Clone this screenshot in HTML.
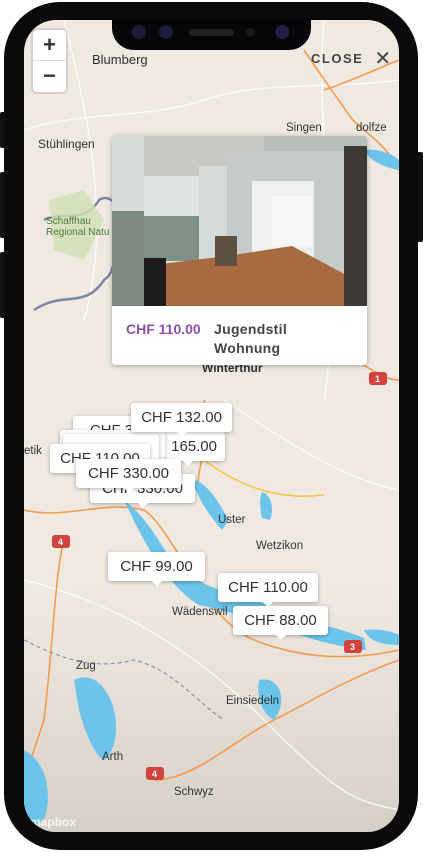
<!DOCTYPE html>
<html><head><meta charset="utf-8"><style>
*{margin:0;padding:0;box-sizing:border-box}
body{width:423px;height:852px;background:#fff;position:relative;overflow:hidden;font-family:"Liberation Sans",sans-serif}
.phone{position:absolute;left:4px;top:2px;width:414px;height:848px;background:#0a0a0c;border-radius:56px}
.btn{position:absolute;background:#111;border-radius:2px}
.screen{position:absolute;left:24px;top:20px;width:375px;height:812px;border-radius:32px;overflow:hidden;background:#efe9e1}
.notch{position:absolute;left:112px;top:20px;width:199px;height:30px;background:#060608;border-radius:0 0 22px 22px}
.m{position:absolute;background:#fff;border-radius:3px;box-shadow:0 1px 4px rgba(0,0,0,.3);font-size:15px;color:#333;height:29px;line-height:29px;text-align:center;white-space:nowrap}
.m:after{content:"";position:absolute;left:50%;bottom:-5px;margin-left:-5px;border:5px solid transparent;border-top-color:#fff;border-bottom:0}
.lbl{position:absolute;font-size:11.5px;color:#333}
</style></head><body>
<div class="btn" style="left:0;top:112px;width:6px;height:36px"></div>
<div class="btn" style="left:0;top:172px;width:6px;height:66px"></div>
<div class="btn" style="left:0;top:252px;width:6px;height:66px"></div>
<div class="btn" style="left:417px;top:152px;width:6px;height:90px"></div>
<div class="phone"></div>
<div class="screen">
<svg width="375" height="812" style="position:absolute;left:0;top:0">
<defs><linearGradient id="sh" x1="0" y1="0" x2="0" y2="1"><stop offset="0" stop-color="#d8d2ca" stop-opacity="0"/><stop offset="1" stop-color="#cfc8bf" stop-opacity=".8"/></linearGradient></defs>
<rect x="0" y="560" width="375" height="252" fill="url(#sh)"/>
<g fill="none" stroke="#fff" stroke-width="1.5" opacity=".8">
<path d="M0 110 C60 90 120 100 180 80 S300 70 375 60"/><path d="M40 0 C60 80 90 200 60 300"/><path d="M200 380 C260 420 320 460 375 470"/><path d="M0 560 C80 580 160 620 240 700 S330 780 375 790"/><path d="M300 0 C290 120 320 260 300 380"/>
</g>
<path d="M10 290 C40 270 60 290 80 260 C95 250 85 230 100 228 C120 230 130 260 150 240 C160 220 170 210 180 230 L200 250" fill="none" stroke="#7d86a4" stroke-width="2.5"/>
<path d="M20 200 C40 190 60 205 75 180 C90 170 100 200 110 205" fill="none" stroke="#7d86a4" stroke-width="2.5"/>
<path d="M25 180 L60 170 L80 200 L60 240 L30 230 Z" fill="#cfe0b4" opacity=".8"/>
<g fill="none" stroke="#f59a4e" stroke-width="1.6">
<path d="M280 30 C300 60 315 80 325 95 S360 120 375 150"/><path d="M300 70 C330 60 350 50 375 40"/><path d="M0 490 C40 500 80 480 120 490 C150 510 180 600 230 620 S330 640 375 630"/><path d="M40 520 C30 560 30 620 20 700 L0 760"/><path d="M130 760 C170 760 210 720 250 700 S320 660 375 640"/><path d="M180 380 C190 420 170 450 175 470"/><path d="M330 340 C350 350 360 360 375 360"/>
</g>
<path d="M180 440 C220 470 260 480 300 475" fill="none" stroke="#f5c542" stroke-width="1.5"/>
<g fill="#6dc4eb">
<path d="M100 480 C120 495 135 520 150 545 C170 560 190 570 215 575 C235 580 255 590 280 600 C300 605 320 610 340 618 L342 630 C320 628 290 620 265 612 C235 600 200 590 175 585 C150 570 130 540 112 505 Z"/>
<path d="M172 460 C190 470 195 485 205 500 L198 510 C185 495 175 480 170 465 Z"/>
<path d="M238 472 C248 475 250 490 246 500 L238 498 C236 488 235 478 238 472Z"/>
<path d="M50 660 C70 650 85 670 90 690 C95 710 90 735 80 740 C70 735 60 710 55 690 Z"/>
<path d="M235 660 C255 655 265 680 250 700 C240 695 232 680 235 660Z"/>
<path d="M0 730 C20 740 30 770 20 800 L0 812Z"/>
<path d="M340 610 C355 608 370 612 375 615 L375 625 C360 625 345 622 340 610Z"/>
<path d="M340 130 C355 128 370 135 375 140 L375 150 C360 148 345 140 340 130Z"/>
</g>
<path d="M0 620 C40 640 70 650 110 640 C150 650 170 680 200 700" fill="none" stroke="#8b92a8" stroke-width="1.2" stroke-dasharray="4 3"/>
<g fill="#d2423e"><rect x="345" y="352" width="18" height="13" rx="3"/><rect x="28" y="515" width="18" height="13" rx="3"/><rect x="320" y="620" width="18" height="13" rx="3"/><rect x="122" y="747" width="18" height="13" rx="3"/></g>
<g fill="#fff" font-size="9" font-family="Liberation Sans" font-weight="bold"><text x="351" y="362">1</text><text x="34" y="525">4</text><text x="326" y="630">3</text><text x="128" y="757">4</text></g>
</svg>
<div class="lbl" style="left:68px;top:32px;font-size:13px">Blumberg</div>
<div class="lbl" style="left:14px;top:117px;font-size:12px">Stühlingen</div>
<div class="lbl" style="left:262px;top:102px">Singen</div>
<div class="lbl" style="left:332px;top:102px">dolfze</div>
<div class="lbl" style="left:22px;top:196px;font-size:10px;color:#4a7a3a">Schaffhau<br>Regional Natu</div>
<div class="lbl" style="left:178px;top:341px;font-weight:bold;font-size:12px">Winterthur</div>
<div class="lbl" style="left:194px;top:494px">Uster</div>
<div class="lbl" style="left:232px;top:520px">Wetzikon</div>
<div class="lbl" style="left:148px;top:586px">Wädenswil</div>
<div class="lbl" style="left:52px;top:640px">Zug</div>
<div class="lbl" style="left:202px;top:675px">Einsiedeln</div>
<div class="lbl" style="left:78px;top:731px">Arth</div>
<div class="lbl" style="left:150px;top:766px">Schwyz</div>
<div class="lbl" style="left:0;top:425px">etik</div>
<div style="position:absolute;left:9px;top:10px;width:33px;height:62px;background:#fff;border-radius:4px;box-shadow:0 0 0 2px rgba(0,0,0,.1);font-size:22px;font-weight:bold;color:#333;text-align:center;line-height:30px">+<div style="border-top:1px solid #ddd">−</div></div>
<div style="position:absolute;left:287px;top:26px;font-size:13px;font-weight:bold;letter-spacing:1.5px;color:#444">CLOSE <span style="font-size:20px;font-weight:normal;margin-left:6px;vertical-align:-2px">✕</span></div>
<div class="m" style="left:49px;top:396px;width:77px;overflow:hidden">CHF 3</div>
<div class="m" style="left:126px;top:412px;width:75px;text-align:right;padding-right:8px">165.00</div>
<div class="m" style="left:36px;top:410px;width:105px"></div>
<div class="m" style="left:39px;top:414px;width:96px"></div>
<div class="m" style="left:107px;top:383px;width:101px">CHF 132.00</div>
<div class="m" style="left:26px;top:424px;width:100px">CHF 110.00</div>
<div class="m" style="left:66px;top:454px;width:105px">CHF 330.00</div>
<div class="m" style="left:52px;top:439px;width:105px">CHF 330.00</div>
<div class="m" style="left:84px;top:532px;width:97px">CHF 99.00</div>
<div class="m" style="left:194px;top:553px;width:100px">CHF 110.00</div>
<div class="m" style="left:209px;top:586px;width:95px">CHF 88.00</div>
<div style="position:absolute;left:88px;top:116px;width:255px;height:229px;background:#fff;border-radius:4px;overflow:hidden;box-shadow:0 1px 6px rgba(0,0,0,.3)">
<svg width="255" height="170" style="display:block">
<rect width="255" height="170" fill="#b7bdb9"/>
<rect x="0" y="0" width="32" height="170" fill="#d8dcd8"/>
<rect x="0" y="75" width="32" height="95" fill="#7c8a80"/>
<rect x="32" y="0" width="120" height="45" fill="#c8c9c3"/>
<rect x="32" y="40" width="55" height="90" fill="#dfe3df"/>
<rect x="32" y="80" width="55" height="45" fill="#7f9187"/>
<rect x="87" y="30" width="28" height="100" fill="#d5dbd8"/>
<rect x="115" y="15" width="140" height="145" fill="#c6cbc9"/>
<rect x="140" y="45" width="62" height="80" fill="#eef0ee"/>
<rect x="160" y="60" width="40" height="50" fill="#f7f8f5"/>
<path d="M32 130 L115 120 L180 110 L255 150 L255 170 L32 170Z" fill="#a86a3e"/>
<rect x="232" y="10" width="23" height="160" fill="#3d3a36"/>
<rect x="32" y="122" width="22" height="48" fill="#1e1c1b"/>
<rect x="103" y="100" width="22" height="30" fill="#5c5040"/>
</svg>
<div style="padding:14px 0 0 14px;font-family:'Liberation Sans',sans-serif;font-size:14px;line-height:19px;font-weight:bold;display:flex">
<span style="color:#8e4ea8;width:88px">CHF 110.00</span><span style="color:#444;letter-spacing:.3px">Jugendstil<br>Wohnung</span></div>
</div>
<div style="position:absolute;left:6px;top:795px;font-size:12px;color:#fff;font-weight:bold;opacity:.8">mapbox</div>
</div>
<div class="notch"><div style="position:absolute;left:20px;top:5px;width:14px;height:14px;border-radius:50%;background:#1a1e3a"></div><div style="position:absolute;left:47px;top:5px;width:14px;height:14px;border-radius:50%;background:#1a1e3a"></div><div style="position:absolute;left:77px;top:9px;width:45px;height:7px;border-radius:4px;background:#222"></div><div style="position:absolute;left:134px;top:8px;width:9px;height:9px;border-radius:50%;background:#1a1a1a"></div><div style="position:absolute;left:163px;top:5px;width:14px;height:14px;border-radius:50%;background:#241c44"></div></div>
</body></html>
